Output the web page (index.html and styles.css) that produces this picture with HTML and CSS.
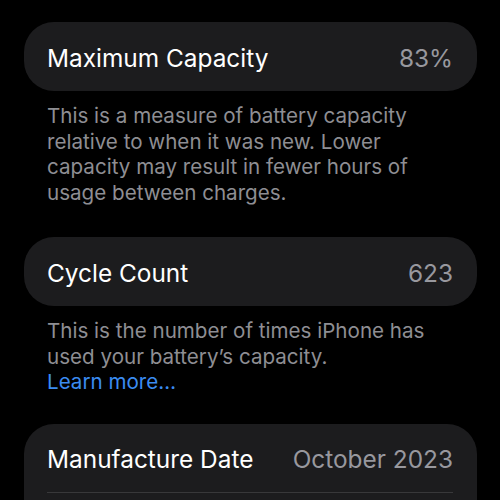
FILE: index.html
```html
<!DOCTYPE html>
<html>
<head>
<meta charset="utf-8">
<link rel="stylesheet" href="styles.css">
</head>
<body>
<div class="page">
  <div class="card">
    <div class="row">
      <span class="label">Maximum Capacity</span>
      <span class="value">83%</span>
    </div>
  </div>
  <p class="desc desc-first">This is a measure of battery capacity relative to when it was new. Lower capacity may result in fewer hours of usage between charges.</p>

  <div class="card">
    <div class="row">
      <span class="label">Cycle Count</span>
      <span class="value">623</span>
    </div>
  </div>
  <p class="desc desc-second">This is the number of times iPhone has used your battery’s capacity.<br><a class="link" href="#">Learn more…</a></p>

  <div class="card">
    <div class="row row-sep">
      <span class="label">Manufacture Date</span>
      <span class="value">October 2023</span>
    </div>
    <div class="row row-empty"></div>
  </div>
</div>
</body>
</html>
```

FILE: styles.css
```css
html, body {
  margin: 0;
  padding: 0;
  background: #000;
}
body {
  width: 500px;
  height: 500px;
  overflow: hidden;
  font-family: Inter, "Noto Sans", "Liberation Sans", sans-serif;
  -webkit-font-smoothing: antialiased;
}
.page {
  padding: 22px 23px 0 24px;
  display: flex;
  flex-direction: column;
}
.card {
  background: #1c1c1e;
  border-radius: 30px;
  padding: 0 24px 0 23px;
}
.row {
  height: 69px;
  display: flex;
  align-items: center;
  justify-content: space-between;
  font-size: 24.4px;
  letter-spacing: 0;
  padding-top: 2px;
  box-sizing: border-box;
}
.row-sep {
  border-bottom: 1px solid #38383a;
  height: 69px;
}
.row-empty {
  height: 40px;
}
.label {
  color: #fff;
}
.value {
  color: #98989e;
}
.desc {
  margin: 12px 0 0 0;
  padding: 0 20px 0 23px;
  font-size: 20.6px;
  line-height: 25.5px;
  color: #8e8e93;
  letter-spacing: 0;
}
.desc-first {
  margin-bottom: 32px;
}
.desc-second {
  margin-bottom: 29.5px;
}
.link {
  color: #3b8cf2;
  text-decoration: none;
}
```
